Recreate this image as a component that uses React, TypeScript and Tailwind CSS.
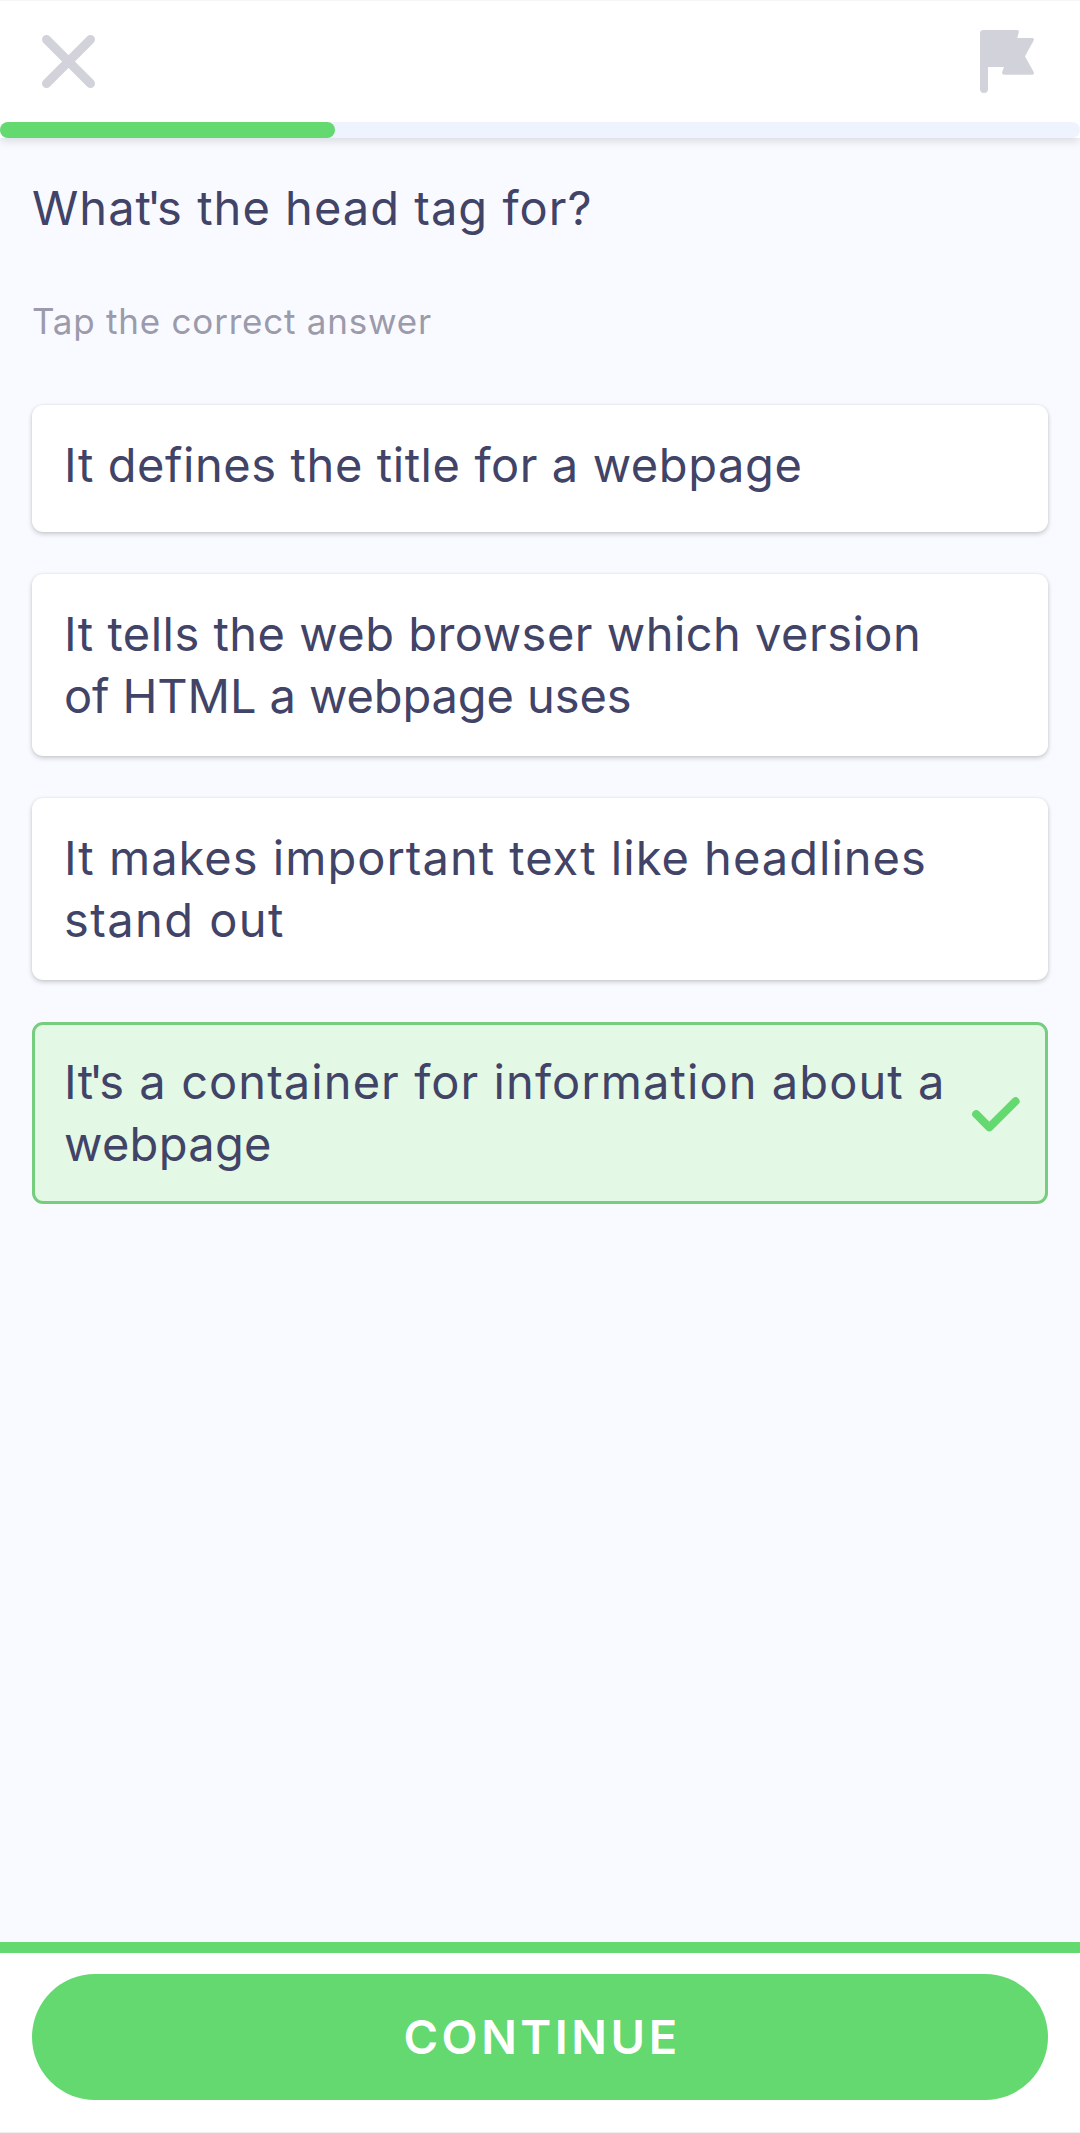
import React from "react";

type Line = { text: string; tracking: string };
type Option = { lines: Line[]; correct?: boolean };

const options: Option[] = [
  { lines: [{ text: "It defines the title for a webpage", tracking: "tracking-[0.59px]" }] },
  {
    lines: [
      { text: "It tells the web browser which version", tracking: "tracking-[0.49px]" },
      { text: "of HTML a webpage uses", tracking: "tracking-[-0.1px]" },
    ],
  },
  {
    lines: [
      { text: "It makes important text like headlines", tracking: "tracking-[1.02px]" },
      { text: "stand out", tracking: "tracking-[1.43px]" },
    ],
  },
  {
    correct: true,
    lines: [
      { text: "It's a container for information about a", tracking: "tracking-[1.08px]" },
      { text: "webpage", tracking: "tracking-[0.3px]" },
    ],
  },
];

// Sets text with its apostrophe kerned tightly against the neighbouring letters.
function Kerned({ text }: { text: string }) {
  const at = text.indexOf("'");
  if (at < 1) return <>{text}</>;
  return (
    <>
      {text.slice(0, at - 1)}
      <span className="tracking-[-4px]">{text.slice(at - 1, at + 1)}</span>
      {text.slice(at + 1)}
    </>
  );
}

function CloseIcon() {
  return (
    <svg width="53" height="53" viewBox="0 0 53 53" fill="none" stroke="#d2d2db" strokeWidth="9" strokeLinecap="round">
      <path d="M4.5 4.5 48.5 48.5M48.5 4.5 4.5 48.5" />
    </svg>
  );
}

function FlagIcon() {
  return (
    <svg width="54" height="63" viewBox="0 0 54 63" fill="#d2d2db">
      <path d="M3.5 0H36.8Q39.4 0 38.8 2.4L37.2 8H51.8Q55 8 53.4 11L45 26.2 53.4 41.6Q55 44.8 51.8 44.8H24.4Q21.4 44.8 22.2 42L24 37H8V59A4 4 0 0 1 0 59V3.5Q0 0 3.5 0Z" />
    </svg>
  );
}

function CheckIcon() {
  return (
    <svg width="48" height="35" viewBox="0 0 48 35" fill="none" stroke="#63d96f" strokeWidth="8" strokeLinecap="round" strokeLinejoin="round">
      <path d="M4.2 17.2 17.3 30.3 43.6 4.2" />
    </svg>
  );
}

function OptionCard({ lines, correct }: Option) {
  const tall = lines.length > 1;
  return (
    <button
      className={`flex w-full items-start justify-between rounded-[11px] text-left ${tall ? "h-[182px]" : "h-[127px]"} ${
        correct
          ? "border-[3px] border-[#75cd7d] bg-[#e3f8e5] pt-[26px] pl-[29px] pr-[25px]"
          : "bg-white pt-[29px] pl-8 shadow-[0_2px_5px_rgba(0,0,0,0.2),0_0_2px_rgba(0,0,0,0.08)]"
      }`}
    >
      <span className="flex flex-col text-[47px] leading-[62px] whitespace-nowrap">
        {lines.map((line) => (
          <span key={line.text} className={line.tracking}>
            <Kerned text={line.text} />
          </span>
        ))}
      </span>
      {correct && (
        <span className="mt-[46px]">
          <CheckIcon />
        </span>
      )}
    </button>
  );
}

export default function App() {
  return (
    <div className="flex h-[2133px] w-[1080px] flex-col overflow-hidden bg-[#f9faff] font-[Inter,sans-serif] text-[#414367]">
      <header className="border-t border-[#f5f5f5] bg-white shadow-[0_3px_9px_rgba(0,0,0,0.13)]">
        <div className="flex h-[121px] items-start justify-between pr-[46px] pl-[42px]">
          <button aria-label="Close" className="mt-[34px]">
            <CloseIcon />
          </button>
          <button aria-label="Report" className="mt-[29px]">
            <FlagIcon />
          </button>
        </div>
        <div className="h-4 rounded-full bg-[#eef3fd]">
          <div className="h-4 w-[335px] rounded-full bg-[#63d96f]" />
        </div>
      </header>

      <main className="flex-1 px-8 pt-[39px]">
        <h1 className="text-[47px] leading-[62px] font-normal tracking-[1.03px]">
          <Kerned text="What's the head tag for?" />
        </h1>
        <p className="mt-[61px] text-[35px] leading-[42px] tracking-[0.78px] text-[#9b9bab]">Tap the correct answer</p>
        <div className="mt-[63px] flex flex-col gap-[42px]">
          {options.map((option) => (
            <OptionCard key={option.lines[0].text} {...option} />
          ))}
        </div>
      </main>

      <footer className="h-[191px] border-t-[11px] border-b border-t-[#63d96f] border-b-[#f0f0f0] bg-white px-8 pt-[21px]">
        <button className="h-[126px] w-full rounded-full bg-[#63d96f] pl-1 text-[47px] leading-[126px] font-semibold tracking-[3.5px] text-white">
          CONTINUE
        </button>
      </footer>
    </div>
  );
}
